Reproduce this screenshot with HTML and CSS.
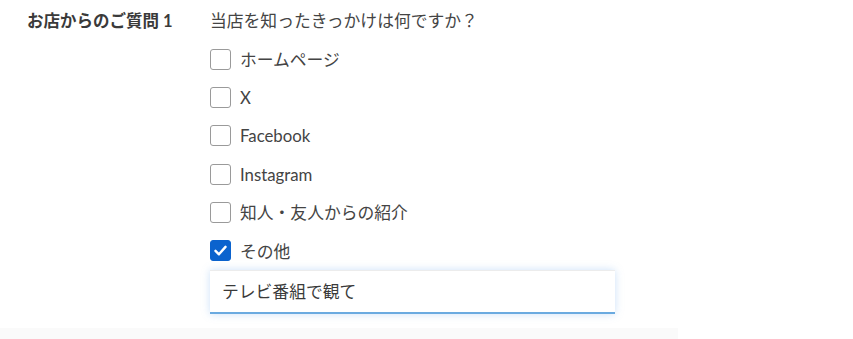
FILE: index.html
```html
<!DOCTYPE html>
<html lang="ja">
<head>
<meta charset="utf-8">
<link rel="stylesheet" href="styles.css">
</head>
<body>
<div class="form">
  <div class="row">
    <div class="label">お店からのご質問 1</div>
    <div class="field">
      <div class="question">当店を知ったきっかけは何ですか？</div>
      <label class="opt"><span class="box"></span><span>ホームページ</span></label>
      <label class="opt"><span class="box"></span><span>X</span></label>
      <label class="opt"><span class="box"></span><span>Facebook</span></label>
      <label class="opt"><span class="box"></span><span>Instagram</span></label>
      <label class="opt"><span class="box"></span><span>知人・友人からの紹介</span></label>
      <label class="opt"><span class="box checked"><svg viewBox="0 0 22 22" width="22" height="22"><path d="M5.2 11.4 L9.2 15.4 L16.8 6.8" fill="none" stroke="#fff" stroke-width="2.8" stroke-linecap="round" stroke-linejoin="round"/></svg></span><span>その他</span></label>
      <div class="input">テレビ番組で観て</div>
    </div>
  </div>
  <div class="next"></div>
</div>
</body>
</html>
```
FILE: styles.css
```css
html, body {
  margin: 0;
  padding: 0;
  background: #fff;
}
body {
  font-family: Lato, "Noto Sans CJK JP", sans-serif;
  font-size: 16.8px;
  color: #444;
}
.form {
  width: 853px;
}
.row {
  display: flex;
  padding: 2px 0 0 27px;
}
.label {
  width: 183px;
  flex: none;
  font-weight: bold;
  font-size: 16.5px;
  color: #3a3a3a;
  height: 38px;
  line-height: 38px;
}
.field {
  display: flex;
  flex-direction: column;
}
.question {
  height: 38px;
  line-height: 38px;
}
.opt {
  display: flex;
  align-items: center;
  gap: 9px;
  height: 38.3px;
}
.box {
  width: 19px;
  height: 19px;
  border: 1.5px solid #9a9a9a;
  border-radius: 3px;
  flex: none;
  box-sizing: content-box;
  display: flex;
  align-items: center;
  justify-content: center;
}
.box.checked {
  background: #0b63ce;
  border-color: #0b63ce;
}
.box svg {
  width: 21px;
  height: 21px;
}
.input {
  box-sizing: border-box;
  width: 405px;
  height: 44px;
  margin-top: 0;
  padding: 0 12px;
  line-height: 42px;
  border-top: 1px solid #ececec;
  border-bottom: 2px solid #6aaae0;
  background: #fff;
  box-shadow: 0 0 8px rgba(110, 170, 235, 0.35);
  color: #3a3a3a;
}
.next {
  width: 678px;
  height: 14px;
  margin-top: 14px;
  background: #fafafa;
}
```
